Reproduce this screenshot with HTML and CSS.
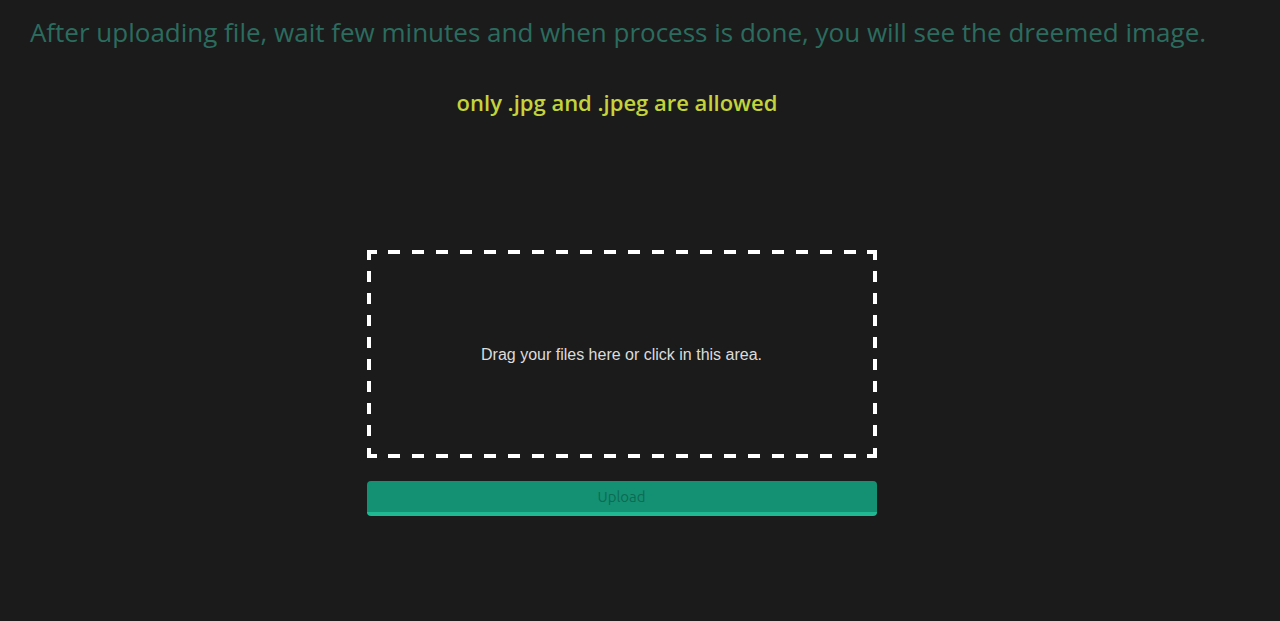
FILE: index.html
```html
<!DOCTYPE html>
<html>
<head>
<meta charset="utf-8">
<link rel="stylesheet" href="styles.css">
</head>
<body>
<main class="page">
  <h1 class="intro">After uploading file, wait few minutes and when process is done, you will see the dreemed image.</h1>
  <h2 class="note">only .jpg and .jpeg are allowed</h2>
  <form class="upload-form">
    <label class="dropzone">
      <span class="dropzone-text">Drag your files here or click in this area.</span>
    </label>
    <button type="button" class="upload-btn">Upload</button>
  </form>
</main>
</body>
</html>
```

FILE: styles.css
```css
html, body {
  margin: 0;
  padding: 0;
  background: #1b1b1b;
  height: 100%;
}
.page {
  display: flex;
  flex-direction: column;
  align-items: center;
  padding-right: 37px;
}
.intro {
  margin: 16px 7px 0 0;
  font-family: "Comic Sans MS", "Open Sans", sans-serif;
  font-weight: 400;
  font-size: 26px;
  line-height: 32px;
  color: #2b6c5f;
  white-space: nowrap;
}
.note {
  margin: 40px 9px 0 0;
  font-family: "Comic Sans MS", "Open Sans", sans-serif;
  font-weight: 600;
  font-size: 22px;
  line-height: 28px;
  color: #c4d33b;
}
.upload-form {
  margin-top: 134px;
  width: 510px;
  display: flex;
  flex-direction: column;
  gap: 23px;
}
.dropzone {
  box-sizing: border-box;
  height: 208px;
  display: flex;
  align-items: center;
  justify-content: center;
  background:
    /* corners */
    linear-gradient(#fff, #fff) left top / 10px 4px no-repeat,
    linear-gradient(#fff, #fff) left top / 4px 10px no-repeat,
    linear-gradient(#fff, #fff) right top / 10px 4px no-repeat,
    linear-gradient(#fff, #fff) right top / 4px 10px no-repeat,
    linear-gradient(#fff, #fff) left bottom / 10px 4px no-repeat,
    linear-gradient(#fff, #fff) left bottom / 4px 10px no-repeat,
    linear-gradient(#fff, #fff) right bottom / 10px 4px no-repeat,
    linear-gradient(#fff, #fff) right bottom / 4px 10px no-repeat,
    /* top & bottom dashes */
    repeating-linear-gradient(to right, #fff 0 12px, transparent 12px 24px) 21px top / 468px 4px no-repeat,
    repeating-linear-gradient(to right, #fff 0 12px, transparent 12px 24px) 21px bottom / 468px 4px no-repeat,
    /* left & right dashes */
    repeating-linear-gradient(to bottom, #fff 0 11px, transparent 11px 22px) left 21px / 4px 166px no-repeat,
    repeating-linear-gradient(to bottom, #fff 0 11px, transparent 11px 22px) right 21px / 4px 166px no-repeat;
}
.dropzone-text {
  font-family: "Liberation Sans", Arial, sans-serif;
  font-size: 16px;
  color: #dcdcdc;
  transform: translateY(1px);
}
.upload-btn {
  box-sizing: border-box;
  height: 35px;
  width: 100%;
  background: #149172;
  border: none;
  border-bottom: 4px solid #1fb892;
  border-radius: 4px;
  font-family: "Ubuntu", "Open Sans", sans-serif;
  font-size: 15px;
  color: #0e6a53;
  padding: 0;
}
```
